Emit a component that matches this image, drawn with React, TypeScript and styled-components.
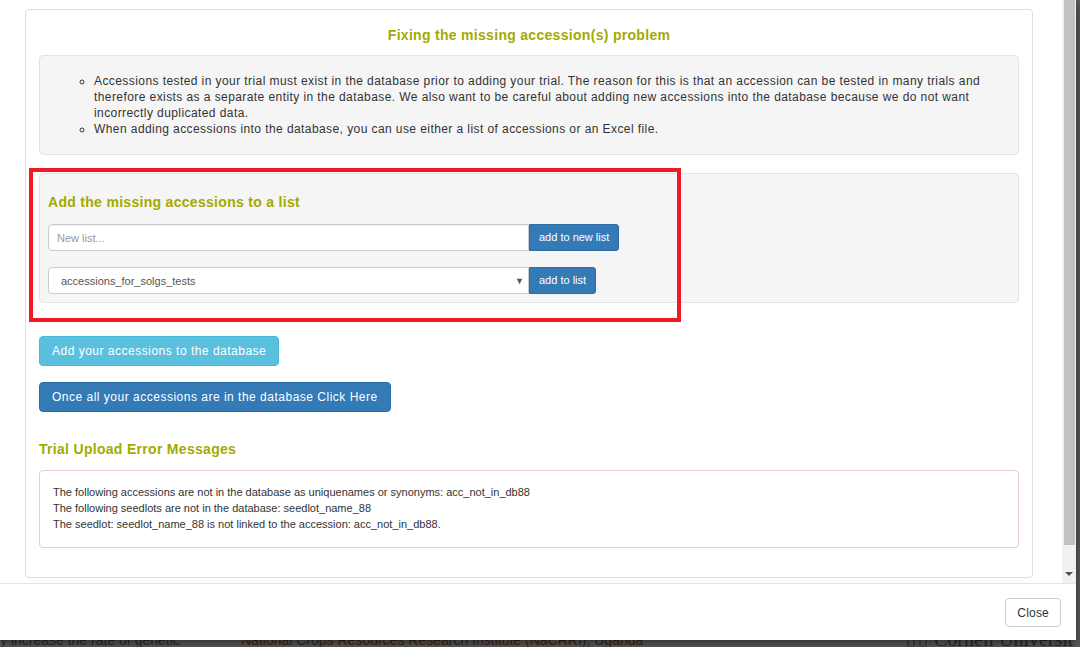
import * as React from 'react'
import styled, { createGlobalStyle } from 'styled-components'

const GlobalStyle = createGlobalStyle`
  html, body {
    margin: 0;
    padding: 0;
    background: #5a5a5a;
  }
  body {
    font-family: "Liberation Sans", Arial, sans-serif;
    color: #333;
  }
`

const olive = '#a3aa00'

const Page = styled.div`
  position: relative;
  width: 1080px;
  height: 647px;
  overflow: hidden;
  background: #5a5a5a;
`

const Backdrop = styled.div`
  position: absolute;
  left: 0;
  top: 630px;
  width: 1080px;
  height: 24px;
  font-size: 15px;
  line-height: 20px;
  white-space: nowrap;
`

const BackText = styled.span<{ $left: number; $serif?: boolean; $brown?: boolean }>`
  position: absolute;
  left: ${({ $left }) => $left}px;
  top: ${({ $serif }) => ($serif ? '-1px' : '0')};
  color: ${({ $brown }) => ($brown ? '#3b2410' : '#2a2a2a')};
  font-family: ${({ $serif }) =>
    $serif ? '"Liberation Serif", "Times New Roman", serif' : '"Liberation Sans", Arial, sans-serif'};
  font-size: ${({ $serif }) => ($serif ? '20px' : '14px')};
`

const Modal = styled.div`
  position: relative;
  z-index: 1;
  width: 1076px;
  height: 640px;
  background: #fff;
  display: flex;
  flex-direction: column;
  box-shadow: 0 3px 9px rgba(0, 0, 0, 0.5);
`

const BodyRow = styled.div`
  display: flex;
  height: 583px;
  overflow: hidden;
`

const Content = styled.div`
  flex: 1;
  padding: 9px 29px 0 25px;
`

const Card = styled.div`
  position: relative;
  height: 567px;
  border: 1px solid #ddd;
  border-radius: 4px;
  padding: 0 13px;
`

const Title = styled.h4`
  margin: 0;
  padding: 15px 0 10px;
  text-align: center;
  font-size: 14px;
  line-height: 20px;
  font-weight: bold;
  letter-spacing: 0.3px;
  color: ${olive};
`

const Well = styled.div<{ $compact?: boolean }>`
  background: #f5f5f5;
  border: 1px solid #e3e3e3;
  border-radius: 4px;
  padding: ${({ $compact }) => ($compact ? '18px 8px 8px' : '17px 19px 17px')};
  margin-bottom: ${({ $compact }) => ($compact ? '33px' : '18px')};
`

const Bullets = styled.ul`
  margin: 0;
  padding-left: 35px;
  list-style-type: circle;
  font-size: 12px;
  line-height: 16px;
  letter-spacing: 0.42px;
  color: #333;
`

const SubTitle = styled.h4<{ $gap: number }>`
  margin: 0 0 ${({ $gap }) => $gap}px;
  font-size: 14px;
  line-height: 20px;
  font-weight: bold;
  letter-spacing: 0.3px;
  color: ${olive};
`

const FieldRow = styled.div<{ $top?: number }>`
  display: flex;
  align-items: flex-start;
  margin-top: ${({ $top }) => $top ?? 0}px;
`

const TextInput = styled.input`
  box-sizing: border-box;
  width: 481px;
  height: 27px;
  border: 1px solid #ccc;
  border-radius: 4px 0 0 4px;
  padding: 0 8px;
  font-family: inherit;
  font-size: 11px;
  color: #555;
  background: #fff;
  box-shadow: inset 0 1px 1px rgba(0, 0, 0, 0.075);
  &::placeholder {
    color: #999;
  }
`

const SelectBox = styled.div`
  box-sizing: border-box;
  width: 481px;
  height: 27px;
  border: 1px solid #ccc;
  border-radius: 4px 0 0 4px;
  padding: 0 4px 0 12px;
  display: flex;
  align-items: center;
  justify-content: space-between;
  font-size: 11px;
  color: #555;
  background: #fff;
`

const Caret = styled.span`
  font-size: 9px;
  color: #555;
`

const SmallButton = styled.button`
  box-sizing: border-box;
  height: 27px;
  padding: 0 9px;
  border: 1px solid #2e6da4;
  border-radius: 0 3px 3px 0;
  background: #337ab7;
  color: #fff;
  font-family: inherit;
  font-size: 11px;
  line-height: 25px;
`

const Button = styled.button<{ $variant: 'info' | 'primary' }>`
  display: block;
  box-sizing: border-box;
  height: 30px;
  padding: 0 12px;
  border: 1px solid ${({ $variant }) => ($variant === 'info' ? '#46b8da' : '#2e6da4')};
  border-radius: 4px;
  background: ${({ $variant }) => ($variant === 'info' ? '#5bc0de' : '#337ab7')};
  color: #fff;
  font-family: inherit;
  font-size: 12px;
  letter-spacing: 0.5px;
  margin-bottom: ${({ $variant }) => ($variant === 'info' ? '16px' : '27px')};
`

const ErrorBox = styled.div`
  margin-top: 11px;
  border: 1px solid #ebccd1;
  border-radius: 4px;
  padding: 13px 13px 15px;
  font-size: 11px;
  line-height: 16px;
  color: #333;
`

const Highlight = styled.div`
  position: absolute;
  left: 3px;
  top: 158px;
  width: 652px;
  height: 154px;
  box-sizing: border-box;
  border: 4px solid #ed1c24;
  pointer-events: none;
`

const Scrollbar = styled.div`
  width: 14px;
  background: #f1f1f1;
  display: flex;
  flex-direction: column;
  align-items: center;
`

const Thumb = styled.div`
  width: 11px;
  height: 545px;
  background: #c1c1c1;
`

const ArrowDown = styled.div`
  margin-top: 27px;
  width: 0;
  height: 0;
  border-left: 4px solid transparent;
  border-right: 4px solid transparent;
  border-top: 4px solid #505050;
`

const Footer = styled.div`
  flex: 1;
  border-top: 1px solid #e5e5e5;
  display: flex;
  justify-content: flex-end;
  align-items: flex-start;
  padding: 14px 15px 0 0;
`

const CloseButton = styled.button`
  box-sizing: border-box;
  height: 29px;
  padding: 0 11px;
  border: 1px solid #ccc;
  border-radius: 4px;
  background: #fff;
  color: #333;
  font-family: inherit;
  font-size: 12px;
  letter-spacing: 0.2px;
`

export default function App() {
  return (
    <Page>
      <GlobalStyle />
      <Backdrop>
        <BackText $left={0}>y increase the rate of genetic</BackText>
        <BackText $left={241} $brown>
          National Crops Resources Research Institute (NaCRRI), Uganda
        </BackText>
        <BackText $left={905} $serif>
          ⌷⌷ Cornell Universit
        </BackText>
      </Backdrop>
      <Modal>
        <BodyRow>
          <Content>
            <Card>
              <Title>Fixing the missing accession(s) problem</Title>
              <Well>
                <Bullets>
                  <li>
                    Accessions tested in your trial must exist in the database prior to adding your
                    trial. The reason for this is that an accession can be tested in many trials and
                    therefore exists as a separate entity in the database. We also want to be careful
                    about adding new accessions into the database because we do not want incorrectly
                    duplicated data.
                  </li>
                  <li>
                    When adding accessions into the database, you can use either a list of accessions
                    or an Excel file.
                  </li>
                </Bullets>
              </Well>
              <Well $compact>
                <SubTitle $gap={12}>Add the missing accessions to a list</SubTitle>
                <FieldRow>
                  <TextInput placeholder="New list..." />
                  <SmallButton>add to new list</SmallButton>
                </FieldRow>
                <FieldRow $top={16}>
                  <SelectBox>
                    <span>accessions_for_solgs_tests</span>
                    <Caret>▼</Caret>
                  </SelectBox>
                  <SmallButton>add to list</SmallButton>
                </FieldRow>
              </Well>
              <Button $variant="info">Add your accessions to the database</Button>
              <Button $variant="primary">Once all your accessions are in the database Click Here</Button>
              <SubTitle $gap={0}>Trial Upload Error Messages</SubTitle>
              <ErrorBox>
                The following accessions are not in the database as uniquenames or synonyms:
                acc_not_in_db88
                <br />
                The following seedlots are not in the database: seedlot_name_88
                <br />
                The seedlot: seedlot_name_88 is not linked to the accession: acc_not_in_db88.
              </ErrorBox>
              <Highlight />
            </Card>
          </Content>
          <Scrollbar>
            <Thumb />
            <ArrowDown />
          </Scrollbar>
        </BodyRow>
        <Footer>
          <CloseButton>Close</CloseButton>
        </Footer>
      </Modal>
    </Page>
  )
}
